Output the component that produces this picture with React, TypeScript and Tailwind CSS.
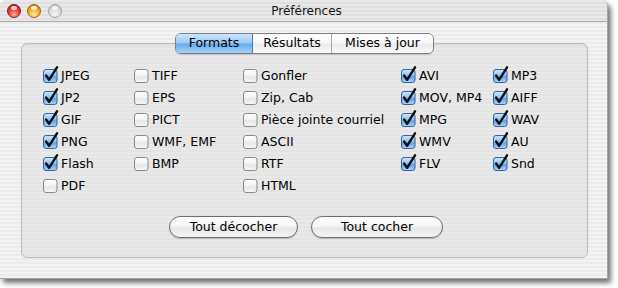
import React, { useId } from "react";

const font = { fontFamily: '"DejaVu Sans", "Liberation Sans", sans-serif' };

function Check({ checked }: { checked: boolean }) {
  const id = useId().replace(/:/g, "");
  return (
    <svg width="16" height="17" viewBox="0 0 16 17" className="shrink-0">
      <defs>
        <linearGradient id={`g${id}`} x1="0" y1="0" x2="0" y2="1">
          {checked ? (
            <>
              <stop offset="0" stopColor="#d4e8fc" />
              <stop offset="0.45" stopColor="#8ec2f5" />
              <stop offset="0.55" stopColor="#5fa3ec" />
              <stop offset="1" stopColor="#a8d4fb" />
            </>
          ) : (
            <>
              <stop offset="0" stopColor="#ffffff" />
              <stop offset="0.5" stopColor="#f3f3f3" />
              <stop offset="0.55" stopColor="#e6e6e6" />
              <stop offset="1" stopColor="#f8f8f8" />
            </>
          )}
        </linearGradient>
      </defs>
      <rect
        x="0.5"
        y="3.5"
        width="13.5"
        height="13"
        rx="2.5"
        fill={`url(#g${id})`}
        stroke={checked ? "#36639e" : "#888888"}
        strokeWidth="1"
      />
      {checked && (
        <path
          d="M3.2 9.6 L6.1 13.8 L14 1.3"
          stroke="#111"
          strokeWidth="2.4"
          fill="none"
          strokeLinecap="round"
          strokeLinejoin="round"
        />
      )}
    </svg>
  );
}

type Item = [string, boolean];

const columns: { w: string; items: Item[] }[] = [
  {
    w: "w-[91px]",
    items: [
      ["JPEG", true],
      ["JP2", true],
      ["GIF", true],
      ["PNG", true],
      ["Flash", true],
      ["PDF", false],
    ],
  },
  {
    w: "w-[109px]",
    items: [
      ["TIFF", false],
      ["EPS", false],
      ["PICT", false],
      ["WMF, EMF", false],
      ["BMP", false],
    ],
  },
  {
    w: "w-[158px]",
    items: [
      ["Gonfler", false],
      ["Zip, Cab", false],
      ["Pièce jointe courriel", false],
      ["ASCII", false],
      ["RTF", false],
      ["HTML", false],
    ],
  },
  {
    w: "w-[92px]",
    items: [
      ["AVI", true],
      ["MOV, MP4", true],
      ["MPG", true],
      ["WMV", true],
      ["FLV", true],
    ],
  },
  {
    w: "w-[80px]",
    items: [
      ["MP3", true],
      ["AIFF", true],
      ["WAV", true],
      ["AU", true],
      ["Snd", true],
    ],
  },
];

function Light({ kind }: { kind: "red" | "yellow" | "gray" }) {
  const cls =
    kind === "red"
      ? "bg-[radial-gradient(circle_at_50%_80%,#ffb0a0_0%,#f0443a_45%,#a8140e_100%)] border-[#7a1a16]"
      : kind === "yellow"
      ? "bg-[radial-gradient(circle_at_50%_80%,#fff0a8_0%,#f8b428_45%,#b86a06_100%)] border-[#93600c]"
      : "bg-[radial-gradient(circle_at_50%_80%,#f6f6f6_0%,#dcdcdc_50%,#b8b8b8_100%)] border-[#a0a0a0]";
  return (
    <div className={`relative w-[14px] h-[14px] rounded-full border ${cls}`}>
      <div className="absolute left-[3px] top-[1px] w-[6px] h-[4px] rounded-full bg-white/75" />
    </div>
  );
}

export default function App() {
  return (
    <div className="w-[618px] h-[288px] bg-white" style={font}>
      <div className="w-[608px] h-[279px] rounded-t-[6px] overflow-hidden shadow-[3px_4px_5px_rgba(0,0,0,0.55)] border-r border-b border-[#a4a4a4] flex flex-col bg-[repeating-linear-gradient(to_bottom,#f3f3f3_0px,#f3f3f3_2px,#ebebeb_2px,#ebebeb_4px)]">
        {/* title bar */}
        <div className="h-[22px] shrink-0 flex items-center relative border-b border-[#a9a9a9] bg-[repeating-linear-gradient(to_bottom,#e9e9e9_0px,#e9e9e9_2px,#dfdfdf_2px,#dfdfdf_4px)]">
          <div className="flex items-center pl-[7px] gap-[6px]">
            <Light kind="red" />
            <Light kind="yellow" />
            <div className="ml-[1px]">
              <Light kind="gray" />
            </div>
          </div>
          <div className="absolute inset-0 flex items-center justify-center text-[12px] text-[#111] pl-[6px]">
            Préférences
          </div>
        </div>

        {/* body */}
        <div className="flex flex-col pl-[21px] pr-[19px] pt-[11px]">
          <div className="flex justify-center relative z-10">
            <div className="flex h-[21px] rounded-[6px] border border-[#7d7d7d] overflow-hidden text-[12.5px] text-black shadow-[0_1px_1px_rgba(0,0,0,0.15)]">
              <div className="w-[77px] flex items-center justify-center border-r border-[#4f77ad] bg-[linear-gradient(to_bottom,#cfe6fd_0%,#9ccbf7_45%,#6aabef_55%,#a6d2fa_100%)]">
                Formats
              </div>
              <div className="w-[79px] flex items-center justify-center border-r border-[#a6a6a6] bg-[linear-gradient(to_bottom,#ffffff_0%,#f7f7f7_45%,#ebebeb_55%,#fafafa_100%)]">
                Résultats
              </div>
              <div className="w-[101px] flex items-center justify-center bg-[linear-gradient(to_bottom,#ffffff_0%,#f7f7f7_45%,#ebebeb_55%,#fafafa_100%)]">
                Mises à jour
              </div>
            </div>
          </div>

          <div className="-mt-[11px] h-[215px] rounded-[6px] border border-[#bcbcbc] bg-[repeating-linear-gradient(to_bottom,#e9e9e9_0px,#e9e9e9_2px,#e4e4e4_2px,#e4e4e4_4px)] shadow-[inset_0_1px_2px_rgba(0,0,0,0.08)] flex flex-col pl-[21px] pt-[21px]">
            <div className="flex text-[12.5px] text-black">
              {columns.map((col, ci) => (
                <div key={ci} className={`${col.w} flex flex-col`}>
                  {col.items.map(([label, on]) => (
                    <div key={label} className="h-[22px] flex items-center gap-[2px]">
                      <div className="-mt-[3px]">
                        <Check checked={on} />
                      </div>
                      <span className="whitespace-nowrap">{label}</span>
                    </div>
                  ))}
                </div>
              ))}
            </div>

            <div className="flex justify-center gap-[13px] mt-[19px] pr-[18px] text-[12.5px] text-black">
              <button className="w-[129px] h-[22px] rounded-full border border-[#6f6f6f] bg-[linear-gradient(to_bottom,#ffffff_0%,#f6f6f6_45%,#e6e6e6_55%,#f4f4f4_100%)] shadow-[0_1px_1px_rgba(0,0,0,0.2)] flex items-center justify-center">
                Tout décocher
              </button>
              <button className="w-[132px] h-[22px] rounded-full border border-[#6f6f6f] bg-[linear-gradient(to_bottom,#ffffff_0%,#f6f6f6_45%,#e6e6e6_55%,#f4f4f4_100%)] shadow-[0_1px_1px_rgba(0,0,0,0.2)] flex items-center justify-center">
                Tout cocher
              </button>
            </div>
          </div>
        </div>
      </div>
    </div>
  );
}
